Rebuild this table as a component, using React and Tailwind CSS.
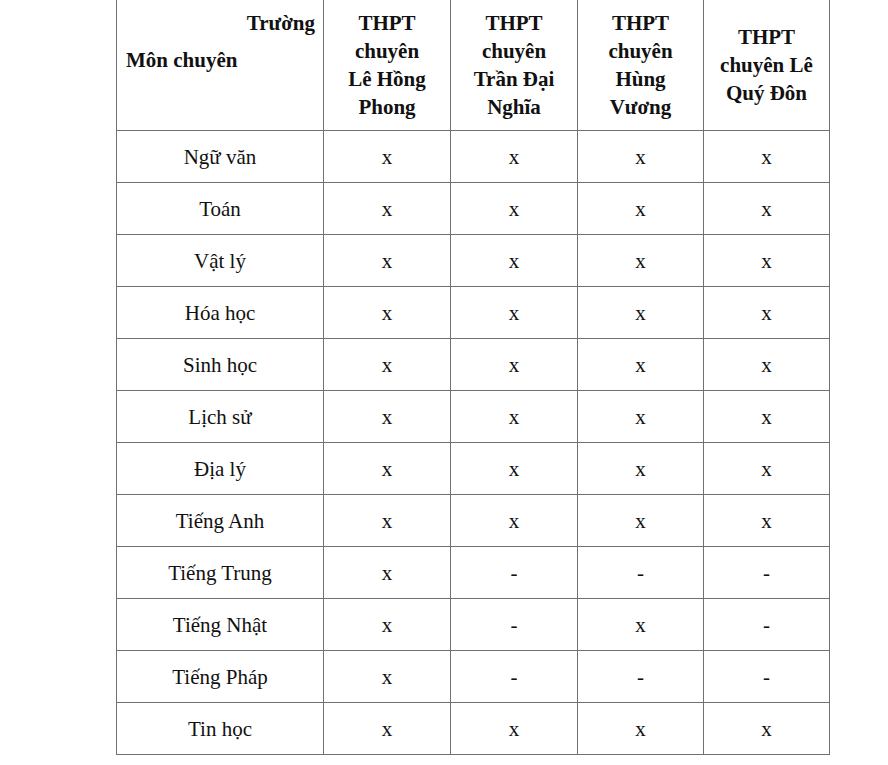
const schools = [
  ['THPT', 'chuyên', 'Lê Hồng', 'Phong'],
  ['THPT', 'chuyên', 'Trần Đại', 'Nghĩa'],
  ['THPT', 'chuyên', 'Hùng', 'Vương'],
  ['THPT', 'chuyên Lê', 'Quý Đôn'],
]

const rows = [
  ['Ngữ văn', 'x', 'x', 'x', 'x'],
  ['Toán', 'x', 'x', 'x', 'x'],
  ['Vật lý', 'x', 'x', 'x', 'x'],
  ['Hóa học', 'x', 'x', 'x', 'x'],
  ['Sinh học', 'x', 'x', 'x', 'x'],
  ['Lịch sử', 'x', 'x', 'x', 'x'],
  ['Địa lý', 'x', 'x', 'x', 'x'],
  ['Tiếng Anh', 'x', 'x', 'x', 'x'],
  ['Tiếng Trung', 'x', '-', '-', '-'],
  ['Tiếng Nhật', 'x', '-', 'x', '-'],
  ['Tiếng Pháp', 'x', '-', '-', '-'],
  ['Tin học', 'x', 'x', 'x', 'x'],
]

export default function App() {
  return (
    <div
      className="w-[888px] h-[765px] bg-white text-[#111] overflow-hidden"
      style={{ fontFamily: '"Liberation Serif", "Times New Roman", serif' }}
    >
      <table className="ml-[116px] border-collapse table-fixed text-[21px] leading-[28px]">
        <colgroup>
          <col className="w-[207px]" />
          <col className="w-[127px]" />
          <col className="w-[127px]" />
          <col className="w-[126px]" />
          <col className="w-[126px]" />
        </colgroup>
        <thead>
          <tr className="h-[130px]">
            <th className="border-x border-b border-[#707070] p-0 align-top font-bold">
              <div className="flex flex-col h-[130px]">
                <div className="text-right pr-[8px] pt-[9px]">Trường</div>
                <div className="text-left pl-[9px] pt-[9px]">Môn chuyên</div>
              </div>
            </th>
            {schools.map((lines, i) => (
              <th key={i} className="border-x border-b border-[#707070] p-0 align-middle text-center font-bold">
                {lines.map((l, j) => (
                  <div key={j}>{l}</div>
                ))}
              </th>
            ))}
          </tr>
        </thead>
        <tbody>
          {rows.map((r, i) => (
            <tr key={i} className="h-[52px]">
              {r.map((c, j) => (
                <td key={j} className="border border-[#707070] p-0 text-center align-middle">
                  {c}
                </td>
              ))}
            </tr>
          ))}
        </tbody>
      </table>
    </div>
  )
}
